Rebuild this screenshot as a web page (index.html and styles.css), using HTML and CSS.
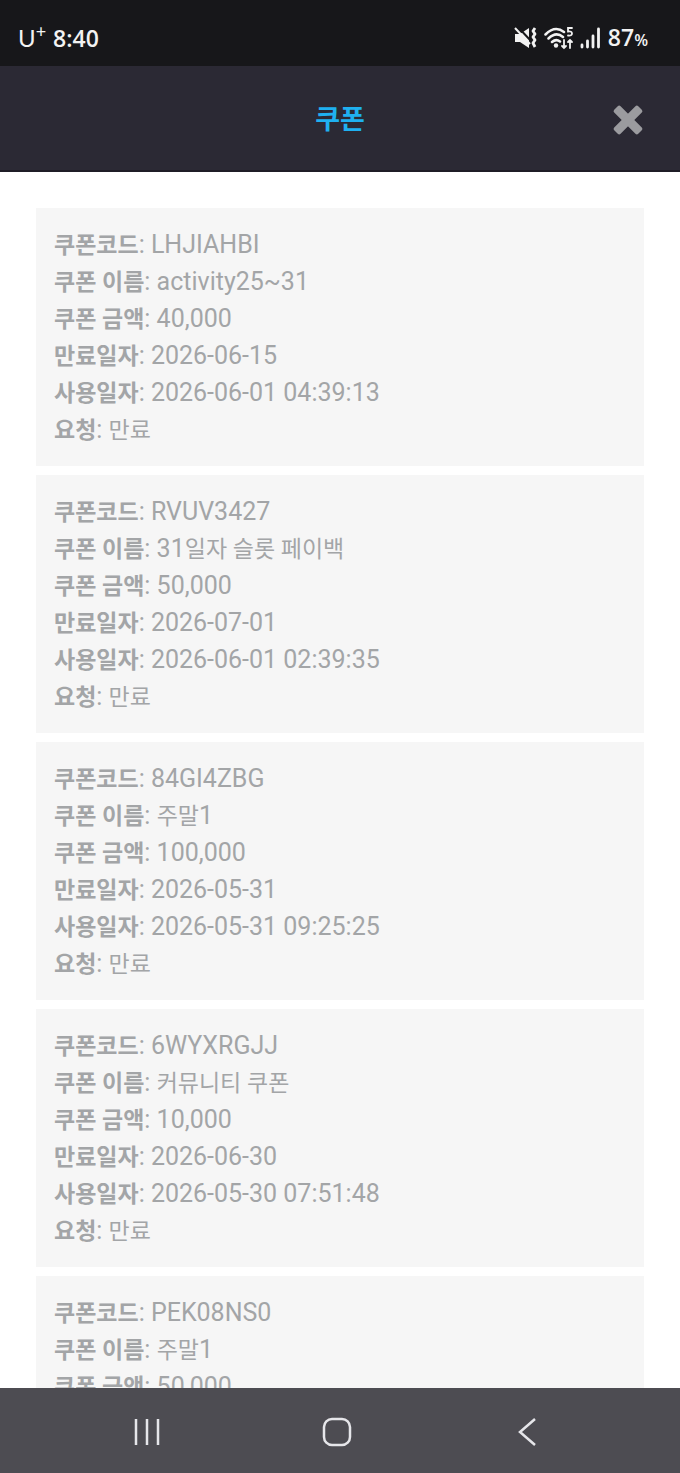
FILE: index.html
```html
<!DOCTYPE html>
<html lang="ko">
<head>
<meta charset="utf-8">
<meta name="viewport" content="width=device-width, initial-scale=1">
<title>쿠폰</title>
<link rel="stylesheet" href="styles.css">
</head>
<body>
<div class="status">
  <div class="status-side">
    <span class="carrier">U<sup class="carrier-plus">+</sup></span>
    <span class="clock">8:40</span>
  </div>
  <div class="status-side status-icons">
    <svg width="24" height="24" viewBox="0 0 24 24" aria-hidden="true">
      <path d="M1 8h5l9-6v20l-9-6H1z" fill="#f2f2f2"/>
      <path d="M3 0l14 15" stroke="#17171a" stroke-width="2"/>
      <path d="M1 2l15 16" stroke="#f2f2f2" stroke-width="2"/>
      <path d="M21 2l-2 3 2 3-2 3 2 3-2 3 2 4" fill="none" stroke="#f2f2f2" stroke-width="2.800" stroke-linejoin="round"/>
    </svg>
    <svg width="30" height="24" viewBox="0 0 30 24" aria-hidden="true">
      <g fill="none" stroke="#f2f2f2" stroke-linecap="round">
        <path d="M1.500 8.500Q11-1 20 6M4.500 12.500Q12 5 19 11M8 16q4-3.500 8-.5" stroke-width="2.500"/>
        <path d="M20 14v8M18 20l2 2 2-2M26 22v-8M24 16l2-2 2 2" stroke-width="1.800"/>
        <path d="M28 2h-4v3.500q4-.500 4 2t-4 2" stroke-width="1.800"/>
      </g>
      <circle cx="12" cy="19.500" r="2.200" fill="#f2f2f2"/>
    </svg>
    <svg width="22" height="24" viewBox="0 0 22 24" aria-hidden="true">
      <path d="M2 19v2M7.500 15v6M13 10v11M18.500 3v18" stroke="#f2f2f2" stroke-width="2.800" stroke-linecap="round"/>
    </svg>
    <span class="battery">87<span class="percent">%</span></span>
  </div>
</div>
<header class="header">
  <h1 class="title">쿠폰</h1>
  <button class="close" type="button" aria-label="닫기">
    <svg width="32" height="32" viewBox="0 0 32 32" aria-hidden="true">
      <g fill="#9b9b9f" transform="rotate(45 16 16)">
        <rect x="-1" y="11.500" width="34" height="9" rx="2"/>
        <rect x="11.500" y="-1" width="9" height="34" rx="2"/>
      </g>
    </svg>
  </button>
</header>
<main class="content">
  <ul class="coupons">
    <li class="coupon">
      <p><strong>쿠폰코드</strong>: LHJIAHBI</p>
      <p><strong>쿠폰 이름</strong>: activity25~31</p>
      <p><strong>쿠폰 금액</strong>: 40,000</p>
      <p><strong>만료일자</strong>: 2026-06-15</p>
      <p><strong>사용일자</strong>: 2026-06-01 04:39:13</p>
      <p><strong>요청</strong>: <span class="hangul">만료</span></p>
    </li>
    <li class="coupon">
      <p><strong>쿠폰코드</strong>: RVUV3427</p>
      <p><strong>쿠폰 이름</strong>: 31<span class="hangul">일자 슬롯 페이백</span></p>
      <p><strong>쿠폰 금액</strong>: 50,000</p>
      <p><strong>만료일자</strong>: 2026-07-01</p>
      <p><strong>사용일자</strong>: 2026-06-01 02:39:35</p>
      <p><strong>요청</strong>: <span class="hangul">만료</span></p>
    </li>
    <li class="coupon">
      <p><strong>쿠폰코드</strong>: 84GI4ZBG</p>
      <p><strong>쿠폰 이름</strong>: <span class="hangul">주말</span>1</p>
      <p><strong>쿠폰 금액</strong>: 100,000</p>
      <p><strong>만료일자</strong>: 2026-05-31</p>
      <p><strong>사용일자</strong>: 2026-05-31 09:25:25</p>
      <p><strong>요청</strong>: <span class="hangul">만료</span></p>
    </li>
    <li class="coupon">
      <p><strong>쿠폰코드</strong>: 6WYXRGJJ</p>
      <p><strong>쿠폰 이름</strong>: <span class="hangul">커뮤니티 쿠폰</span></p>
      <p><strong>쿠폰 금액</strong>: 10,000</p>
      <p><strong>만료일자</strong>: 2026-06-30</p>
      <p><strong>사용일자</strong>: 2026-05-30 07:51:48</p>
      <p><strong>요청</strong>: <span class="hangul">만료</span></p>
    </li>
    <li class="coupon">
      <p><strong>쿠폰코드</strong>: PEK08NS0</p>
      <p><strong>쿠폰 이름</strong>: <span class="hangul">주말</span>1</p>
      <p><strong>쿠폰 금액</strong>: 50,000</p>
    </li>
  </ul>
</main>
<nav class="navbar">
  <button class="nav-button" type="button" aria-label="최근 앱">
    <svg width="32" height="32" viewBox="0 0 32 32" aria-hidden="true"><path d="M5 3v26M16 3v26M27 3v26" stroke="#e6e6ea" stroke-width="2.500"/></svg>
  </button>
  <button class="nav-button" type="button" aria-label="홈">
    <svg width="32" height="32" viewBox="0 0 32 32" aria-hidden="true"><rect x="3" y="3" width="26" height="26" rx="8" fill="none" stroke="#e6e6ea" stroke-width="2.500"/></svg>
  </button>
  <button class="nav-button" type="button" aria-label="뒤로">
    <svg width="32" height="32" viewBox="0 0 32 32" aria-hidden="true"><path d="M24 3L9 16l15 13" fill="none" stroke="#e6e6ea" stroke-width="2.500"/></svg>
  </button>
</nav>
</body>
</html>
```
FILE: styles.css
```css
* {
  box-sizing: border-box;
}

body {
  display: flex;
  flex-direction: column;
  height: 100vh;
  margin: 0;
  background: #fff;
  font-family: Roboto, "Noto Sans CJK KR", sans-serif;
  font-size: 25px;
}

button {
  display: flex;
  padding: 0;
  border: 0;
  background: none;
  cursor: pointer;
}

.status {
  display: flex;
  flex: none;
  justify-content: space-between;
  padding: 10px 32px 0 18px;
  height: 66px;
  background: #17171a;
  color: #f2f2f2;
}

.status-side {
  display: flex;
  align-items: center;
  gap: 7px;
  height: 56px;
}

.status-icons {
  gap: 6px;
}

.carrier {
  font-family: Lato, sans-serif;
  font-size: 24px;
  font-weight: 400;
  line-height: 32px;
}

.carrier-plus {
  font-size: 18px;
  line-height: 0;
}

.clock,
.battery {
  font-family: "Open Sans", sans-serif;
  font-size: 23px;
  font-weight: 600;
  line-height: 32px;
}

.percent {
  font-size: 16px;
}

.header {
  display: grid;
  flex: none;
  grid-template-columns: 1fr auto 1fr;
  align-items: center;
  padding: 4px 36px 0;
  height: 106px;
  border-bottom: 2px solid #1f1d26;
  background: #2b2934;
}

.title {
  grid-column: 2;
  margin: 0;
  color: #1fb0f0;
  font-size: 27px;
  font-weight: 700;
  line-height: 36px;
}

.close {
  justify-self: end;
}

.content {
  flex: 1;
  min-height: 0;
  padding: 36px 36px 0;
  overflow: hidden;
}

.coupons {
  display: flex;
  flex-direction: column;
  gap: 9px;
  margin: 0;
  padding: 0;
  list-style: none;
}

.coupon {
  padding: 18px;
  background: #f6f6f6;
  color: #a3a5a7;
}

.coupon p {
  margin: 0;
  height: 37px;
  line-height: 37px;
}

.coupon strong,
.hangul {
  font-size: 23px;
  line-height: 1;
}

.navbar {
  display: flex;
  flex: none;
  justify-content: center;
  align-items: center;
  gap: 158px;
  height: 85px;
  padding: 3px 7px 0 0;
  background: #4d4c52;
}
```
